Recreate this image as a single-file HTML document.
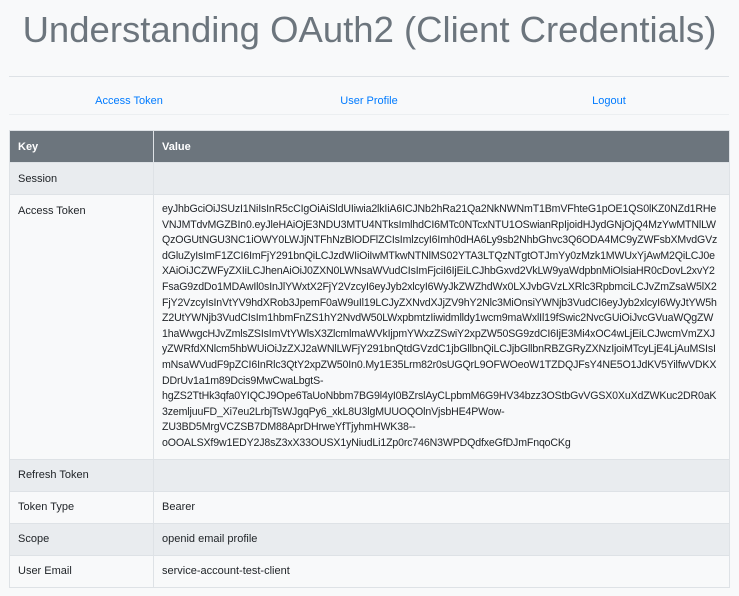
<!DOCTYPE html>
<html><head><meta charset="utf-8"><style>
body{margin:0;background:#f8f9fa;font-family:"Liberation Sans",sans-serif;color:#212529;width:739px;height:596px;overflow:hidden}
h1{margin:0;position:absolute;top:7px;left:0;width:739px;text-align:center;font-weight:400;font-size:36.5px;color:#6c757d;line-height:46px;white-space:nowrap}
.hr1{position:absolute;left:9px;width:720px;top:76px;border-top:1px solid #dee2e6}
.nav{position:absolute;left:9px;width:720px;top:95px;display:flex;font-size:11px}
.nav a{flex:1;text-align:center;color:#007bff;text-decoration:none}
.hr2{position:absolute;left:9px;width:720px;top:114px;border-top:1px solid #eceff1}
table{position:absolute;left:9px;top:130px;width:721px;border-collapse:collapse;font-size:11px}
td,th{border:1px solid #dee2e6;padding:0 8px;text-align:left;vertical-align:middle;height:31px}
th{background:#6c757d;color:#fff;font-weight:700;border-color:#dee2e6;height:31px}
td:first-child,th:first-child{width:127px}
tr.g td{background:#e9ecef}
.tok{line-height:15.6px;padding:7px 8px 7px;white-space:nowrap;font-size:10.6px;letter-spacing:-0.15px;vertical-align:top}
td.kt{vertical-align:top;padding-top:10px}
</style></head><body>
<h1>Understanding OAuth2 (Client Credentials)</h1>
<div class="hr1"></div>
<div class="nav"><a>Access Token</a><a>User Profile</a><a>Logout</a></div>
<div class="hr2"></div>
<table>
<tr><th>Key</th><th>Value</th></tr>
<tr class="g"><td>Session</td><td></td></tr>
<tr><td class="kt">Access Token</td><td class="tok">eyJhbGciOiJSUzI1NiIsInR5cCIgOiAiSldUIiwia2lkIiA6ICJNb2hRa21Qa2NkNWNmT1BmVFhteG1pOE1QS0lKZ0NZd1RHe<br>VNJMTdvMGZBIn0.eyJleHAiOjE3NDU3MTU4NTksImlhdCI6MTc0NTcxNTU1OSwianRpIjoidHJydGNjOjQ4MzYwMTNlLW<br>QzOGUtNGU3NC1iOWY0LWJjNTFhNzBlODFlZCIsImlzcyI6Imh0dHA6Ly9sb2NhbGhvc3Q6ODA4MC9yZWFsbXMvdGVz<br>dGluZyIsImF1ZCI6ImFjY291bnQiLCJzdWIiOiIwMTkwNTNlMS02YTA3LTQzNTgtOTJmYy0zMzk1MWUxYjAwM2QiLCJ0e<br>XAiOiJCZWFyZXIiLCJhenAiOiJ0ZXN0LWNsaWVudCIsImFjciI6IjEiLCJhbGxvd2VkLW9yaWdpbnMiOlsiaHR0cDovL2xvY2<br>FsaG9zdDo1MDAwIl0sInJlYWxtX2FjY2VzcyI6eyJyb2xlcyI6WyJkZWZhdWx0LXJvbGVzLXRlc3RpbmciLCJvZmZsaW5lX2<br>FjY2VzcyIsInVtYV9hdXRob3JpemF0aW9uIl19LCJyZXNvdXJjZV9hY2Nlc3MiOnsiYWNjb3VudCI6eyJyb2xlcyI6WyJtYW5h<br>Z2UtYWNjb3VudCIsIm1hbmFnZS1hY2NvdW50LWxpbmtzIiwidmlldy1wcm9maWxlIl19fSwic2NvcGUiOiJvcGVuaWQgZW<br>1haWwgcHJvZmlsZSIsImVtYWlsX3ZlcmlmaWVkIjpmYWxzZSwiY2xpZW50SG9zdCI6IjE3Mi4xOC4wLjEiLCJwcmVmZXJ<br>yZWRfdXNlcm5hbWUiOiJzZXJ2aWNlLWFjY291bnQtdGVzdC1jbGllbnQiLCJjbGllbnRBZGRyZXNzIjoiMTcyLjE4LjAuMSIsI<br>mNsaWVudF9pZCI6InRlc3QtY2xpZW50In0.My1E35Lrm82r0sUGQrL9OFWOeoW1TZDQJFsY4NE5O1JdKV5YilfwVDKX<br>DDrUv1a1m89Dcis9MwCwaLbgtS-<br>hgZS2TtHk3qfa0YIQCJ9Ope6TaUoNbbm7BG9l4yI0BZrslAyCLpbmM6G9HV34bzz3OStbGvVGSX0XuXdZWKuc2DR0aK<br>3zemljuuFD_Xi7eu2LrbjTsWJgqPy6_xkL8U3lgMUUOQOlnVjsbHE4PWow-<br>ZU3BD5MrgVCZSB7DM88AprDHrweYfTjyhmHWK38--<br>oOOALSXf9w1EDY2J8sZ3xX33OUSX1yNiudLi1Zp0rc746N3WPDQdfxeGfDJmFnqoCKg</td></tr>
<tr class="g"><td>Refresh Token</td><td></td></tr>
<tr><td>Token Type</td><td>Bearer</td></tr>
<tr class="g"><td>Scope</td><td>openid email profile</td></tr>
<tr><td>User Email</td><td>service-account-test-client</td></tr>
</table>
</body></html>
